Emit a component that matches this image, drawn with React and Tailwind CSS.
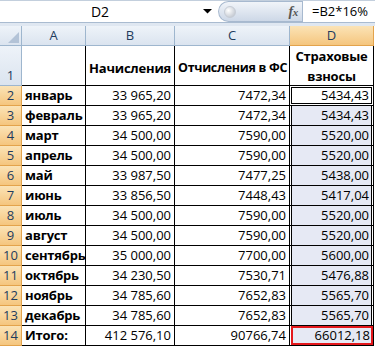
import React from "react";

const rows = [
  ["январь", "33 965,20", "7472,34", "5434,43"],
  ["февраль", "33 965,20", "7472,34", "5434,43"],
  ["март", "34 500,00", "7590,00", "5520,00"],
  ["апрель", "34 500,00", "7590,00", "5520,00"],
  ["май", "33 987,50", "7477,25", "5438,00"],
  ["июнь", "33 856,50", "7448,43", "5417,04"],
  ["июль", "34 500,00", "7590,00", "5520,00"],
  ["август", "34 500,00", "7590,00", "5520,00"],
  ["сентябрь", "35 000,00", "7700,00", "5600,00"],
  ["октябрь", "34 230,50", "7530,71", "5476,88"],
  ["ноябрь", "34 785,60", "7652,83", "5565,70"],
  ["декабрь", "34 785,60", "7652,83", "5565,70"],
  ["Итого:", "412 576,10", "90766,74", "66012,18"],
];

const hdr =
  "bg-gradient-to-b from-[#eef3f9] to-[#dbe4ef] border-r border-b border-[#9eb6ce] flex items-center justify-center text-[#1f3c5e]";
const hdrSel =
  "bg-gradient-to-b from-[#fbe3b6] to-[#f5c67e] border-r border-b border-[#e3a34c] flex items-center justify-center text-[#1f3c5e]";
const cell = "border-r border-b border-black flex items-center px-[3px] whitespace-nowrap";

export default function App() {
  return (
    <div className="w-[375px] h-[348px] overflow-hidden bg-white font-['Open_Sans',sans-serif] text-[13px] leading-none text-black">
      {/* formula bar */}
      <div className="h-[23px] flex border-t border-[#c3cfdd] border-b border-b-[#a9bbd0] bg-white">
        <div className="w-[200px] flex items-center justify-center text-[14px]">D2</div>
        <div className="w-[18px] flex items-center justify-start pl-[3px]">
          <svg width="9" height="5" viewBox="0 0 9 5">
            <polygon points="0,0 9,0 4.5,4.5" fill="#000" />
          </svg>
        </div>
        <div className="w-[84px] h-full rounded-l-full bg-gradient-to-b from-[#f1f4f9] to-[#cdd8e7] border border-[#a7b9cf] border-r-0 flex items-center pl-[5px] pr-[4px]">
          <div className="w-[12px] h-[12px] rounded-full bg-[radial-gradient(circle_at_35%_35%,#ffffff,#b5bcc7)] border border-[#c6ccd5]" />
          <span className="ml-auto font-['Liberation_Serif',serif] italic text-[14px] text-[#555] font-bold tracking-tight">
            f<span className="text-[11px]">x</span>
          </span>
        </div>
        <div className="flex-1 h-full border-l border-[#a7b9cf] flex items-center pl-[9px] text-[13px]">
          =B2*16%
        </div>
      </div>
      <div className="h-[3px] bg-[#dfe7f1]" />

      {/* sheet */}
      <div className="grid grid-cols-[22px_64px_89px_115px_84px] grid-rows-[20px_40px_repeat(13,20px)]">
        {/* header row */}
        <div className={hdr + " relative"}>
          <svg className="absolute right-[2px] bottom-[2px]" width="11" height="11" viewBox="0 0 11 11">
            <polygon points="11,0 11,11 0,11" fill="#b3c3d7" />
          </svg>
        </div>
        <div className={hdr}>A</div>
        <div className={hdr}>B</div>
        <div className={hdr}>C</div>
        <div className={hdrSel}>D</div>

        {/* row 1 */}
        <div className={hdr.replace("items-center", "items-end") + " pb-[3px]"}>1</div>
        <div className={cell} />
        <div className={cell + " font-bold pt-[6px] tracking-[-0.2px]"}>Начисления</div>
        <div className={cell + " font-bold pt-[6px] text-[12.5px] tracking-[-0.3px]"}>Отчисления в ФС</div>
        <div className={cell + " font-bold flex-col justify-center !items-center leading-[20px] px-0 tracking-[-0.2px]"}>
          <span>Страховые</span>
          <span>взносы</span>
        </div>

        {rows.map((r, i) => {
          const n = i + 2;
          const last = n === 14;
          const first = n === 2;
          return (
            <React.Fragment key={n}>
              <div className={hdrSel}>{n}</div>
              <div className={cell + " font-bold tracking-[-0.2px]"}>{r[0]}</div>
              <div className={cell + " justify-end"}>{r[1]}</div>
              <div className={cell + " justify-end"}>{r[2]}</div>
              <div className="border-r border-b border-black">
                {first ? (
                  <div className="h-[calc(100%-2px)] m-px border border-black bg-white flex items-center justify-end pr-[2px]">
                    {r[3]}
                  </div>
                ) : last ? (
                  <div className="h-full ml-px border-2 border-[#e4171b] bg-[#e6e9f4] flex items-center justify-end pr-[1px]">
                    {r[3]}
                  </div>
                ) : (
                  <div className="h-full mx-px border-x border-black bg-[#e6e9f4] flex items-center justify-end pr-[2px]">
                    {r[3]}
                  </div>
                )}
              </div>
            </React.Fragment>
          );
        })}
      </div>
    </div>
  );
}
